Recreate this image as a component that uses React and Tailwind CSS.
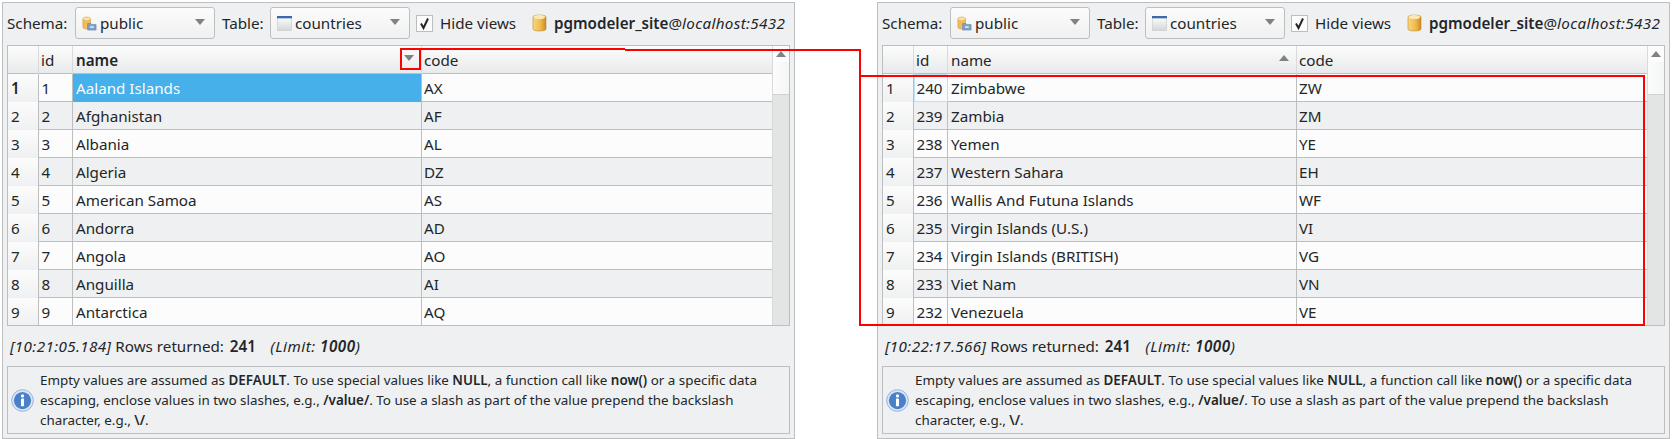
const leftRows = [
  ["1", "Aaland Islands", "AX"],
  ["2", "Afghanistan", "AF"],
  ["3", "Albania", "AL"],
  ["4", "Algeria", "DZ"],
  ["5", "American Samoa", "AS"],
  ["6", "Andorra", "AD"],
  ["7", "Angola", "AO"],
  ["8", "Anguilla", "AI"],
  ["9", "Antarctica", "AQ"],
];

const rightRows = [
  ["240", "Zimbabwe", "ZW"],
  ["239", "Zambia", "ZM"],
  ["238", "Yemen", "YE"],
  ["237", "Western Sahara", "EH"],
  ["236", "Wallis And Futuna Islands", "WF"],
  ["235", "Virgin Islands (U.S.)", "VI"],
  ["234", "Virgin Islands (BRITISH)", "VG"],
  ["233", "Viet Nam", "VN"],
  ["232", "Venezuela", "VE"],
];

const Triangle = ({ up = false, className = "" }) => (
  <svg width="10" height="6" viewBox="0 0 10 6" className={className}>
    <path d={up ? "M0 6 L5 0 L10 6 Z" : "M0 0 L10 0 L5 6 Z"} fill="#7f8284" />
  </svg>
);

const SchemaIcon = () => (
  <svg width="15" height="15" viewBox="0 0 16 16" className="shrink-0">
    <path d="M1 3 C1 0.6 9 0.6 9 3 V12 C9 14.4 1 14.4 1 12 Z" fill="#f2bc5c" stroke="#d9983a" strokeWidth="0.7" />
    <ellipse cx="5" cy="3" rx="3.6" ry="1.5" fill="#fbe3a8" />
    <path d="M6 8 H9.5 L10.5 9 H15 V15 H6 Z" fill="#7d9fcb" stroke="#5f83b3" strokeWidth="0.6" />
    <rect x="8.5" y="11" width="4" height="1.6" fill="#e6eef8" />
  </svg>
);

const TableIcon = () => (
  <svg width="15" height="15" viewBox="0 0 16 16" className="shrink-0">
    <defs>
      <linearGradient id="tbl" x1="0" y1="0" x2="0" y2="1">
        <stop offset="0" stopColor="#ffffff" />
        <stop offset="1" stopColor="#d4d6d8" />
      </linearGradient>
    </defs>
    <rect x="0.5" y="0.5" width="15" height="15" fill="url(#tbl)" stroke="#c4c6c8" strokeWidth="0.6" />
    <rect x="0" y="0" width="16" height="2.5" fill="#3f6aa8" />
  </svg>
);

const DbIcon = () => (
  <svg width="15" height="18" viewBox="0 0 15 18" className="shrink-0">
    <defs>
      <linearGradient id="dbg" x1="0" y1="0" x2="1" y2="0">
        <stop offset="0" stopColor="#f9d77e" />
        <stop offset="0.6" stopColor="#f3b748" />
        <stop offset="1" stopColor="#c98a24" />
      </linearGradient>
    </defs>
    <path d="M1 3 C1 0.4 14 0.4 14 3 V15 C14 17.6 1 17.6 1 15 Z" fill="url(#dbg)" stroke="#b9892f" strokeWidth="0.6" />
    <ellipse cx="7.5" cy="3" rx="5.8" ry="2" fill="#fbeab8" />
  </svg>
);

const InfoIcon = () => (
  <svg width="23" height="23" viewBox="0 0 24 24" className="shrink-0">
    <circle cx="12" cy="12" r="11.3" fill="#dbe6f5" stroke="#7fa2d2" strokeWidth="0.8" />
    <circle cx="12" cy="12" r="9" fill="#4a80c8" />
    <circle cx="12" cy="7.2" r="1.7" fill="#ffffff" />
    <rect x="10.4" y="10" width="3.2" height="8" rx="0.5" fill="#ffffff" />
  </svg>
);

const Combo = ({ icon, label }) => (
  <div className="w-[140px] h-[32px] shrink-0 flex items-center pl-[6px] pr-[9px] rounded-[3px] border border-[#bcbebf] bg-gradient-to-b from-[#fcfcfc] to-[#eff0f1]">
    {icon}
    <span className="ml-[3px] flex-1">{label}</span>
    <Triangle className="mb-[3px]" />
  </div>
);

const Toolbar = () => (
  <div className="h-[42px] flex items-center pb-[2px]">
    <span className="w-[68px] shrink-0">Schema:</span>
    <Combo icon={<SchemaIcon />} label="public" />
    <span className="ml-[7px] w-[48px] shrink-0">Table:</span>
    <Combo icon={<TableIcon />} label="countries" />
    <div className="ml-[6px] w-[17px] h-[17px] border border-[#bcbebf] bg-[#fcfcfc] flex items-center justify-center shrink-0">
      <svg width="13" height="13" viewBox="0 0 13 13">
        <path d="M3 6.5 L5.5 11 L10 1.5" fill="none" stroke="#232629" strokeWidth="2" />
      </svg>
    </div>
    <span className="ml-[7px] w-[92px] shrink-0 whitespace-nowrap">Hide views</span>
    <DbIcon />
    <span className="ml-[7px] whitespace-nowrap">
      <b className="font-semibold">pgmodeler_site</b>@<i className="tracking-[0.35px]">localhost:5432</i>
    </span>
  </div>
);

const Header = ({ sortIcon, boldName }) => (
  <div className="grid grid-cols-[31px_34px_349px_350px] h-[28px] bg-gradient-to-b from-[#fcfcfc] to-[#e9eaeb] border-b border-[#bcbebf] leading-[29px]">
    <div className="border-r border-[#d8dadb]" />
    <div className="border-r border-[#d8dadb] pl-[2px]">id</div>
    <div className={`border-r border-[#d8dadb] pl-[3px] flex justify-between ${boldName ? "font-semibold" : ""}`}>
      <span>name</span>
      {sortIcon}
    </div>
    <div className="pl-[2px]">code</div>
  </div>
);

const Row = ({ index, row, selected, focused, bold }) => {
  const even = index % 2 === 1;
  return (
    <div className={`grid grid-cols-[31px_34px_349px_350px] h-[28px] border-b border-[#bcbebf] leading-[28px] ${even ? "bg-[#eff0f1]" : "bg-[#fcfcfc]"}`}>
      <div className={`border-r border-[#bcbebf] pl-[3px] bg-gradient-to-b from-[#fcfcfc] to-[#eff0f1] ${bold ? "font-semibold" : ""}`}>{index + 1}</div>
      {focused ? (
        <div className="border border-[#bfe0f5] bg-[#f8fbfe] pl-[1.5px] leading-[26px]">{row[0]}</div>
      ) : (
        <div className="border-r border-[#bcbebf] pl-[2.5px]">{row[0]}</div>
      )}
      <div className={`border-r border-[#bcbebf] pl-[3px] ${selected ? "bg-[#45b0ea] text-[#fcfcfc]" : ""}`}>{row[1]}</div>
      <div className="pl-[2px]">{row[2]}</div>
    </div>
  );
};

const Scrollbar = () => (
  <div className="w-[17px] flex flex-col border-l border-[#d8dadb]">
    <div className="h-[16px] bg-[#fcfcfc] flex items-center justify-center">
      <Triangle up />
    </div>
    <div className="h-[33px] bg-gradient-to-r from-[#fcfcfc] to-[#f4f5f5] border-b border-[#d0d2d3]" />
    <div className="flex-1 bg-[#e3e5e5]" />
  </div>
);

const Panel = ({ rows, time, first }) => (
  <div className="w-[793px] h-[437px] mt-[2px] pl-[4px] pr-[4px] border border-[#bcbebf] bg-[#eff0f1] shrink-0">
    <Toolbar />
    <div className="w-[783px] h-[281px] flex border border-[#bcbebf] overflow-hidden">
      <div className="w-[764px] shrink-0">
        <Header
          boldName={first}
          sortIcon={<Triangle up={!first} className="mt-[9px] mr-[7px]" />}
        />
        {rows.map((row, i) => (
          <Row key={row[0]} index={i} row={row} selected={first && i === 0} bold={first && i === 0} focused={!first && i === 0} />
        ))}
      </div>
      <Scrollbar />
    </div>
    <div className="h-[40px] pl-[3px] flex items-center">
      <span className="whitespace-pre">
        <i className="tracking-[0.4px]">[{time}]</i> Rows returned: <b className="font-semibold ml-[2px]">241</b>
        <span className="ml-[10px]" />
        <i className="tracking-[0.5px]">
          {" "}(Limit: <b className="font-semibold">1000</b>)
        </i>
      </span>
    </div>
    <div className="w-[783px] h-[68px] flex items-center pl-[3px] border border-[#bcbebf] text-[13.4px] leading-[20px]">
      <InfoIcon />
      <p className="ml-[6px] mb-[1px]">
        Empty values are assumed as <b className="font-semibold">DEFAULT</b>. To use special values like <b className="font-semibold">NULL</b>, a function call like <b className="font-semibold">now()</b> or a specific data
        <br />
        escaping, enclose values in two slashes, e.g., <b className="font-semibold">/value/</b>. To use a slash as part of the value prepend the backslash
        <br />
        character, e.g., <b className="font-semibold">\/</b>.
      </p>
    </div>
  </div>
);

export default function App() {
  return (
    <div className="relative w-[1672px] h-[439px] overflow-hidden bg-white flex pl-[2px] gap-[82px] text-[#232629] text-[15.2px] font-['Noto_Sans',sans-serif]">
      <Panel rows={leftRows} time="10:21:05.184" first />
      <Panel rows={rightRows} time="10:22:17.566" />

      {/* red annotations */}
      <div className="absolute left-[400px] top-[48px] w-[21px] h-[22px] border-2 border-[#ff0000]" />
      <div className="absolute left-[421px] top-[48px] w-[204px] h-[2px] bg-[#ff0000]" />
      <div className="absolute left-[625px] top-[49px] w-[236px] h-[2px] bg-[#ff0000]" />
      <div className="absolute left-[859px] top-[49px] w-[2px] h-[27px] bg-[#ff0000]" />
      <div className="absolute left-[859px] top-[75px] w-[786px] h-[251px] border-2 border-[#ff0000]" />
    </div>
  );
}
